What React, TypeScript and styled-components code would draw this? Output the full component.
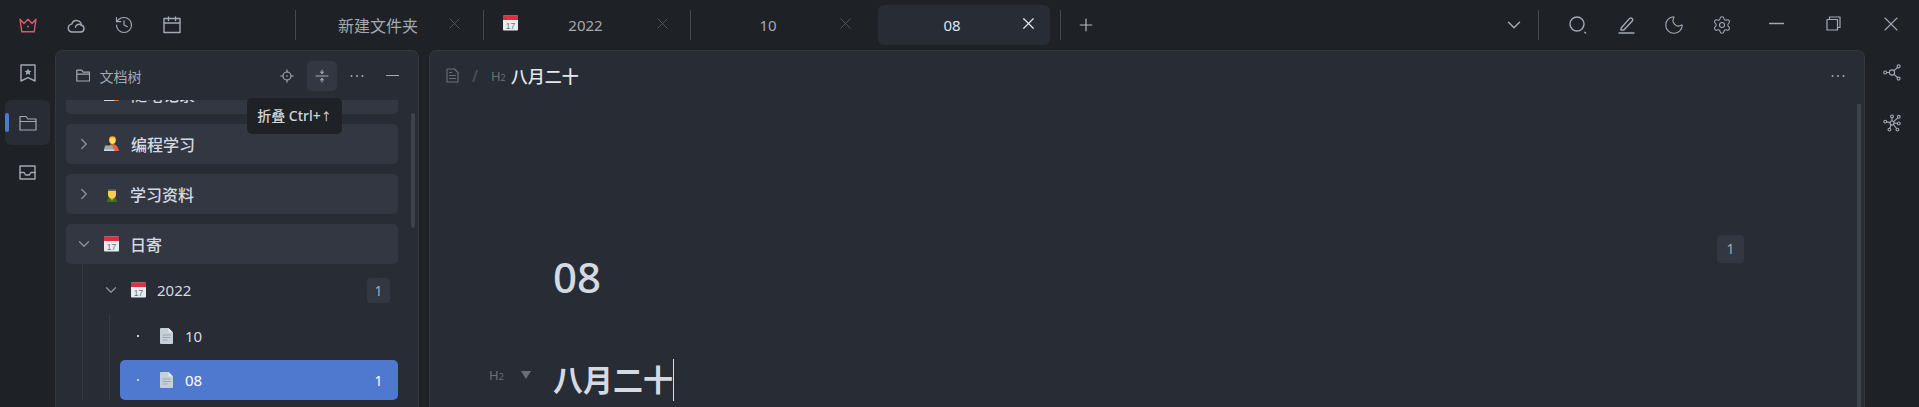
import { ReactNode } from "react";
import styled, { createGlobalStyle } from "styled-components";
import { ChevronDown, ChevronRight, History, Moon, Plus, Settings, X } from "lucide-react";

const GlobalStyle = createGlobalStyle`
    html, body, #root {
        margin: 0;
        height: 100%;
        overflow: hidden;
    }
    body {
        background: #1e2126;
        font-family: "Noto Sans", "Noto Sans CJK SC", sans-serif;
    }
`;

const Page = styled.div`
    display: flex;
    flex-direction: column;
    height: 407px;
    background: #1e2126;
`;

const TopBar = styled.header`
    display: flex;
    align-items: center;
    flex: 0 0 50px;
    height: 50px;
    color: #a3a9b3;
`;

const IconGroup = styled.div`
    display: flex;
    align-items: center;
    padding-left: ${(p: { $pad?: number }) => p.$pad ?? 0}px;
`;

const LeadGroup = styled(IconGroup)`
    width: 291px;
    box-sizing: border-box;
`;

const IconSlot = styled.div<{ $w?: number; $color?: string; $dy?: number; $h?: number }>`
    display: flex;
    align-items: center;
    justify-content: center;
    width: ${(p) => p.$w ?? 48}px;
    height: ${(p) => p.$h ?? 30}px;
    color: ${(p) => p.$color ?? "inherit"};
    margin-top: ${(p) => p.$dy ?? 0}px;
`;

const Sep = styled.div<{ $ml?: number }>`
    flex: 0 0 1px;
    height: 30px;
    background: #454952;
    margin-left: ${(p) => p.$ml ?? 0}px;
`;

const Tab = styled.div<{ $w: number; $active?: boolean; $left: number; $right: number; $ml?: number; $size?: number }>`
    position: relative;
    display: flex;
    align-items: center;
    flex: 0 0 ${(p) => p.$w}px;
    height: 40px;
    margin-left: ${(p) => p.$ml ?? 0}px;
    padding: 0 ${(p) => p.$right}px 0 ${(p) => p.$left}px;
    box-sizing: border-box;
    border-radius: 6px;
    background: ${(p) => (p.$active ? "#282c35" : "transparent")};
    color: ${(p) => (p.$active ? "#dfe4ec" : "#a3a9b3")};
    font-size: ${(p) => p.$size ?? 15}px;
`;

const TabTitle = styled.span`
    flex: 1;
    text-align: center;
`;

const TabClose = styled.span<{ $active?: boolean }>`
    display: flex;
    margin-top: -3px;
    color: ${(p) => (p.$active ? "#dfe4ec" : "#565a62")};
`;

const TabIcon = styled.span`
    display: flex;
    margin-top: -4px;
`;

const AddButton = styled.div`
    display: flex;
    margin-left: 15px;
    color: #b4bac4;
`;

const Spacer = styled.div`
    flex: 1;
`;

const Body = styled.div`
    display: flex;
    flex: 1;
    min-height: 0;
`;

const Rail = styled.nav<{ $w: number }>`
    display: flex;
    flex-direction: column;
    flex: 0 0 ${(p) => p.$w}px;
    color: #a3a9b3;
`;

const RailItem = styled.div<{ $active?: boolean; $mt?: number }>`
    position: relative;
    display: flex;
    align-items: center;
    justify-content: center;
    width: 45px;
    height: 45px;
    margin: ${(p) => p.$mt ?? 0}px 0 0 5px;
    border-radius: 6px;
    background: ${(p) => (p.$active ? "#282c35" : "transparent")};
`;

const ActiveBar = styled.span`
    position: absolute;
    left: 0;
    top: 13px;
    width: 4px;
    height: 19px;
    border-radius: 2px;
    background: #4f79cf;
`;

const TreePanel = styled.aside`
    position: relative;
    display: flex;
    flex-direction: column;
    flex: 0 0 364px;
    box-sizing: border-box;
    background: #282c35;
    border: 1px solid #34373d;
    border-bottom: 0;
    border-radius: 8px 8px 0 0;
    margin-right: 10px;
`;

const PanelHead = styled.div`
    display: flex;
    align-items: center;
    flex: 0 0 49px;
    padding-left: 20px;
    color: #a3a9b3;
    font-size: 14px;
`;

const PanelTitle = styled.span`
    margin-left: 9px;
    flex: 1;
`;

const HeadButton = styled.div<{ $on?: boolean }>`
    display: flex;
    align-items: center;
    justify-content: center;
    width: 30px;
    height: 30px;
    margin-left: 5px;
    border-radius: 5px;
    background: ${(p) => (p.$on ? "#323741" : "transparent")};
    color: #a3a9b3;
`;

const HeadButtons = styled.div`
    display: flex;
    align-items: center;
    padding-right: 11px;
`;

const Tip = styled.div`
    position: absolute;
    left: 191px;
    top: 47px;
    z-index: 5;
    width: 95px;
    height: 36px;
    line-height: 36px;
    text-align: center;
    border-radius: 5px;
    background: #1e2126;
    color: #d2d6dd;
    font-size: 14px;
    font-weight: 500;
    & > small {
        font-size: 11px;
    }
`;

const PanelScroll = styled.span`
    position: absolute;
    left: 355px;
    top: 62px;
    width: 4px;
    height: 115px;
    border-radius: 2px;
    background: #3e424b;
`;

const TreeClip = styled.div`
    flex: 1;
    min-height: 0;
    overflow: hidden;
    padding: 0 20px 0 10px;
`;

const TreeList = styled.div`
    margin-top: -26px;
`;

const Row = styled.div<{ $boxed?: boolean; $active?: boolean; $pad?: number; $last?: boolean }>`
    display: flex;
    align-items: center;
    height: 40px;
    padding: 0 8px 0 ${(p) => p.$pad ?? 11}px;
    border-radius: 5px;
    margin-bottom: ${(p) => (p.$boxed && !p.$last ? 10 : 0)}px;
    background: ${(p) => (p.$active ? "#4f79cf" : p.$boxed ? "#323741" : "transparent")};
    color: ${(p) => (p.$active ? "#fff" : "#d5dae2")};
    font-size: ${(p) => (p.$boxed ? 16 : 15)}px;
    font-weight: ${(p) => (p.$boxed ? 500 : 400)};
`;

const Arrow = styled.span`
    display: flex;
    flex: 0 0 14px;
    min-width: 0;
    justify-content: center;
    color: #8b909a;
    margin-right: 13px;
    & > svg {
        flex-shrink: 0;
    }
`;

const Dot = styled.span`
    flex: 0 0 14px;
    margin-right: 14px;
    display: flex;
    justify-content: center;
    &::before {
        content: "";
        width: 2px;
        height: 2px;
        background: #c9ced6;
    }
`;

const Glyph = styled.span`
    display: flex;
    flex: 0 0 15px;
    justify-content: center;
    margin-right: 11px;
`;

const Label = styled.span`
    flex: 1;
`;

const Badge = styled.span<{ $plain?: boolean }>`
    width: 23px;
    height: 25px;
    line-height: 25px;
    text-align: center;
    border-radius: 4px;
    font-size: 14px;
    background: ${(p) => (p.$plain ? "transparent" : "#323741")};
    color: ${(p) => (p.$plain ? "#fff" : "#a3a9b3")};
`;

const Branch = styled.div<{ $ml: number; $pl: number; $pt: number }>`
    margin-left: ${(p) => p.$ml}px;
    padding: ${(p) => p.$pt}px 0 0 ${(p) => p.$pl}px;
    border-left: 1px solid #363a42;
    display: flex;
    flex-direction: column;
    gap: 4px;
`;

const Editor = styled.main`
    position: relative;
    flex: 1;
    min-width: 0;
    box-sizing: border-box;
    background: #282c35;
    border: 1px solid #34373d;
    border-bottom: 0;
    border-radius: 8px 8px 0 0;
`;

const Crumbs = styled.div`
    display: flex;
    align-items: center;
    height: 49px;
    padding: 0 19px 0 16px;
    color: #a3a9b3;
`;

const CrumbIcon = styled.span`
    display: flex;
    color: #6b707a;
`;

const CrumbSlash = styled.span`
    margin: 0 13px 0 13px;
    font-size: 16px;
    color: #555a63;
`;

const HeadingTag = styled.span`
    font-size: 13px;
    color: #6b707a;
    & > small {
        font-size: 9px;
    }
`;

const CrumbText = styled.span`
    flex: 1;
    margin-left: 5px;
    font-size: 17px;
    font-weight: 500;
    color: #e4e8ee;
`;

const Content = styled.div`
    padding: 147px 0 0 123px;
`;

const DocTitle = styled.h1`
    margin: 0;
    font-size: 42px;
    font-weight: 500;
    line-height: 60px;
    color: #d5dae2;
`;

const HeadingRow = styled.div`
    position: relative;
    margin-top: 52px;
    height: 42px;
    display: flex;
    align-items: center;
`;

const Gutter = styled.div`
    position: absolute;
    left: -64px;
    top: 7px;
    display: flex;
    align-items: center;
    gap: 17px;
`;

const Fold = styled.span`
    width: 0;
    height: 0;
    border-left: 5px solid transparent;
    border-right: 5px solid transparent;
    border-top: 8px solid #696e78;
`;

const Heading = styled.h2`
    margin: 0;
    font-size: 30px;
    line-height: 42px;
    font-weight: 700;
    color: #d5dae2;
    border-right: 1px solid #d5dae2;
`;

const RefBadge = styled.span`
    position: absolute;
    left: 1287px;
    top: 184px;
    width: 27px;
    height: 28px;
    line-height: 28px;
    text-align: center;
    border-radius: 4px;
    background: #323741;
    color: #a3a9b3;
    font-size: 14px;
`;

const EditorScroll = styled.span`
    position: absolute;
    right: 3px;
    top: 53px;
    bottom: 0;
    width: 4px;
    background: #3e424b;
`;

const Svg = ({ w, h, children, sw = 1.4 }: { w: number; h: number; children: ReactNode; sw?: number }) => (
    <svg width={w} height={h} viewBox={`0 0 ${w} ${h}`} fill="none" stroke="currentColor" strokeWidth={sw} strokeLinecap="round" strokeLinejoin="round">
        {children}
    </svg>
);

const CrownIcon = () => (
    <Svg w={18} h={15}>
        <path d="M1 1.2 5 5.4 9 1.2l4 4.2 4-4.2-1.8 12.6H2.8z" />
        <circle cx="9" cy="8.6" r="1" fill="currentColor" stroke="none" />
    </Svg>
);

const CloudIcon = () => (
    <Svg w={18} h={15}>
        <path d="M4.6 14h9.2a3.4 3.4 0 0 0 .6-6.7 4.9 4.9 0 0 0-9.600-1.200A4 4 0 0 0 4.600 14z" />
        <path d="M8.400 9.200a3.600 3.600 0 0 1 6-1.900" />
    </Svg>
);

const CalendarIcon = () => (
    <Svg w={18} h={18}>
        <rect x="1" y="2.500" width="16" height="14" />
        <path d="M1 7h16M5.500 1v3.500M12.500 1v3.500" />
    </Svg>
);

const BookmarkIcon = () => (
    <Svg w={16} h={18}>
        <path d="M1 1h14v16l-7-3.400L1 17z" />
        <path d="m8 4.400 1.100 2.300 2.400.3-1.800 1.600.5 2.400L8 9.800l-2.200 1.200.5-2.400L4.500 7l2.400-.3z" fill="currentColor" stroke="none" />
    </Svg>
);

const FolderIcon = ({ s = 1 }: { s?: number }) => (
    <svg width={18 * s} height={16 * s} viewBox="0 0 18 16" fill="none" stroke="currentColor" strokeWidth={1.2 / s} strokeLinejoin="round">
        <path d="M1 1.500h6l2 2.500h8v11H1zM1 6.500h16" />
    </svg>
);

const InboxIcon = () => (
    <Svg w={17} h={15}>
        <rect x="1" y="1" width="15" height="13" />
        <path d="M1 7.500h4.200L6.600 10h3.800l1.400-2.500H16" />
    </Svg>
);

const LocateIcon = () => (
    <Svg w={14} h={14} sw={1.1}>
        <circle cx="7" cy="7" r="4" />
        <circle cx="7" cy="7" r="0.8" fill="currentColor" stroke="none" />
        <path d="M7 .8v2.200M7 11v2.200M.8 7H3M11 7h2.200" />
    </Svg>
);

const CollapseIcon = () => (
    <Svg w={14} h={14} sw={1.1}>
        <path d="M1 7h12M7 1v3M7 10v3M5.600 3 7 4.600 8.400 3M5.600 11 7 9.400 8.400 11" />
    </Svg>
);

const DotsIcon = () => (
    <svg width="14" height="4" viewBox="0 0 14 4" fill="currentColor">
        <circle cx="1.500" cy="2" r="1" />
        <circle cx="7" cy="2" r="1" />
        <circle cx="12.500" cy="2" r="1" />
    </svg>
);

const MinusIcon = ({ w = 13, sw = 1.2 }: { w?: number; sw?: number }) => (
    <Svg w={w} h={3} sw={sw}>
        <path d={`M0.5 1.5H${w - 0.5}`} />
    </Svg>
);

const SearchIcon = () => (
    <Svg w={18} h={18}>
        <circle cx="8" cy="8" r="7" />
        <path d="m15.800 16.200.8.8" />
    </Svg>
);

const PenIcon = () => (
    <Svg w={17} h={18}>
        <path d="M3 12.200 11.600 2.400a1.600 1.600 0 0 1 2.300 0l.4.4a1.600 1.600 0 0 1 0 2.200L5.800 14H3z" />
        <path d="M1 17h15" />
    </Svg>
);

const RestoreIcon = () => (
    <Svg w={15} h={15} sw={1.2}>
        <rect x="1" y="3.500" width="10.500" height="10.500" />
        <path d="M3.500 3.500V1H14v10.500h-2.500" />
    </Svg>
);

const GraphIcon = () => (
    <Svg w={18} h={17} sw={1.1}>
        <circle cx="9" cy="8.500" r="2.600" />
        <circle cx="2.200" cy="8.500" r="1.500" />
        <circle cx="15.600" cy="2.400" r="1.500" />
        <circle cx="15.600" cy="14.600" r="1.500" />
        <path d="M3.700 8.500h2.700M11 6.700l3.500-3.200M11 10.300l3.500 3.200" />
    </Svg>
);

const GlobalGraphIcon = () => (
    <Svg w={18} h={18} sw={1.1}>
        <circle cx="9" cy="9" r="2" />
        <circle cx="9" cy="2.400" r="1.400" />
        <circle cx="15.800" cy="2.800" r="1.400" />
        <circle cx="2.200" cy="7.600" r="1.400" />
        <circle cx="15.800" cy="9.400" r="1.400" />
        <circle cx="6.400" cy="15.600" r="1.400" />
        <circle cx="14.400" cy="15.600" r="1.400" />
        <path d="M9 3.800V7M10.600 7.600l4.200-3.800M3.600 7.900 7 8.600M11 9.100l3.400.2M8 10.800l-1.200 3.400M10.400 10.500l3.200 4" />
    </Svg>
);

const DateEmoji = () => (
    <svg width="15" height="16" viewBox="0 0 15 16">
        <rect x="0" y="0.500" width="15" height="15" rx="1" fill="#e8ecef" />
        <path d="M1 .5h13a1 1 0 0 1 1 1V5H0V1.500a1 1 0 0 1 1-1z" fill="#dd2e44" />
        <text x="7.500" y="13.600" textAnchor="middle" fontSize="8.500" fontFamily="Liberation Sans" fill="#66757f">17</text>
    </svg>
);

const CoderEmoji = () => (
    <svg width="16" height="16" viewBox="0 0 16 16">
        <circle cx="8.500" cy="3.600" r="3.400" fill="#ffac33" />
        <circle cx="8.500" cy="5" r="3" fill="#ffdc5d" />
        <path d="M5 12c0-3 1.500-4 3.500-4s5.500 1 6.500 7H5z" fill="#e8623f" />
        <path d="M1 9.500h7.500l1 4.500H0z" fill="#99aab5" />
        <rect x="0" y="13.500" width="10.500" height="1.500" fill="#ccd6dd" />
    </svg>
);

const StudentEmoji = () => (
    <svg width="14" height="16" viewBox="0 0 14 16">
        <path d="M3 12h8l1 4H2z" fill="#3e721d" />
        <path d="M5.800 11h2.400L7 15z" fill="#ffcc4d" />
        <path d="M3 5h8v3.500a4 4 0 0 1-8 0z" fill="#ffcc4d" />
        <path d="M1 2.400 7 .5l6 1.900-6 2.200z" fill="#31373d" />
        <rect x="3" y="3.400" width="8" height="1.400" fill="#66757f" />
    </svg>
);

const FileEmoji = () => (
    <svg width="13" height="16" viewBox="0 0 13 16">
        <path d="M1 0h7.500L13 4.500V15a1 1 0 0 1-1 1H1a1 1 0 0 1-1-1V1a1 1 0 0 1 1-1z" fill="#c5d0d8" />
        <path d="M8.500 0 13 4.500H9.300a.8.8 0 0 1-.8-.8z" fill="#e6ebef" />
        <path d="M2.500 7h8M2.500 9.500h8M2.500 12h5" stroke="#9aa7b1" strokeWidth="1" />
    </svg>
);

const CrumbFile = () => (
    <Svg w={13} h={15} sw={1.1}>
        <path d="M1 1h7.500L12 4.500V14H1zM3.500 7.500h6M3.500 10.500h6M3.500 4.500h2" />
    </Svg>
);

export default function App() {
    return (
        <Page>
            <GlobalStyle />
            <TopBar>
                <LeadGroup $pad={4}>
                    <IconSlot $color="#d9596a"><CrownIcon /></IconSlot>
                    <IconSlot><CloudIcon /></IconSlot>
                    <IconSlot><History size={20} strokeWidth={1.4} /></IconSlot>
                    <IconSlot><CalendarIcon /></IconSlot>
                </LeadGroup>
                <Sep $ml={4} />
                <Tab $w={187} $left={15} $right={19} $size={16}>
                    <TabTitle>新建文件夹</TabTitle>
                    <TabClose><X size={19} strokeWidth={1.1} /></TabClose>
                </Tab>
                <Sep />
                <Tab $w={206} $left={19} $right={18}>
                    <TabIcon><DateEmoji /></TabIcon>
                    <TabTitle>2022</TabTitle>
                    <TabClose><X size={19} strokeWidth={1.1} /></TabClose>
                </Tab>
                <Sep />
                <Tab $w={182} $left={9} $right={18}>
                    <TabTitle>10</TabTitle>
                    <TabClose><X size={19} strokeWidth={1.1} /></TabClose>
                </Tab>
                <Tab $w={172} $active $left={7} $right={12} $ml={5}>
                    <TabTitle>08</TabTitle>
                    <TabClose $active><X size={19} strokeWidth={1.5} /></TabClose>
                </Tab>
                <Sep $ml={10} />
                <AddButton><Plus size={20} strokeWidth={1.4} /></AddButton>
                <Spacer />
                <IconSlot><ChevronDown size={22} strokeWidth={1.6} /></IconSlot>
                <Sep />
                <IconGroup $pad={15}>
                    <IconSlot><SearchIcon /></IconSlot>
                    <IconSlot><PenIcon /></IconSlot>
                    <IconSlot><Moon size={22} strokeWidth={1.2} /></IconSlot>
                    <IconSlot><Settings size={20} strokeWidth={1.3} /></IconSlot>
                </IconGroup>
                <IconGroup $pad={2}>
                    <IconSlot $w={57} $dy={-3}><MinusIcon w={15} sw={1.4} /></IconSlot>
                    <IconSlot $w={57} $dy={-3}><RestoreIcon /></IconSlot>
                    <IconSlot $w={57} $dy={-3}><X size={24} strokeWidth={1.1} /></IconSlot>
                </IconGroup>
            </TopBar>
            <Body>
                <Rail $w={55}>
                    <RailItem><BookmarkIcon /></RailItem>
                    <RailItem $active $mt={5}>
                        <ActiveBar />
                        <FolderIcon />
                    </RailItem>
                    <RailItem $mt={5}><InboxIcon /></RailItem>
                </Rail>
                <TreePanel>
                    <PanelHead>
                        <FolderIcon s={0.8} />
                        <PanelTitle>文档树</PanelTitle>
                        <HeadButtons>
                            <HeadButton><LocateIcon /></HeadButton>
                            <HeadButton $on><CollapseIcon /></HeadButton>
                            <HeadButton><DotsIcon /></HeadButton>
                            <HeadButton><MinusIcon /></HeadButton>
                        </HeadButtons>
                    </PanelHead>
                    <Tip>折叠 Ctrl+<small>↑</small></Tip>
                    <TreeClip>
                        <TreeList>
                            <Row $boxed>
                                <Arrow><ChevronRight size={18} strokeWidth={1.8} /></Arrow>
                                <Glyph><CoderEmoji /></Glyph>
                                <Label>随笔记录</Label>
                            </Row>
                            <Row $boxed>
                                <Arrow><ChevronRight size={18} strokeWidth={1.8} /></Arrow>
                                <Glyph><CoderEmoji /></Glyph>
                                <Label>编程学习</Label>
                            </Row>
                            <Row $boxed>
                                <Arrow><ChevronRight size={18} strokeWidth={1.8} /></Arrow>
                                <Glyph><StudentEmoji /></Glyph>
                                <Label>学习资料</Label>
                            </Row>
                            <Row $boxed $last>
                                <Arrow><ChevronDown size={18} strokeWidth={1.8} /></Arrow>
                                <Glyph><DateEmoji /></Glyph>
                                <Label>日寄</Label>
                            </Row>
                            <Branch $ml={16} $pl={11} $pt={6}>
                                <Row $pad={10}>
                                    <Arrow><ChevronDown size={18} strokeWidth={1.8} /></Arrow>
                                    <Glyph><DateEmoji /></Glyph>
                                    <Label>2022</Label>
                                    <Badge>1</Badge>
                                </Row>
                                <Branch $ml={15} $pl={10} $pt={2}>
                                    <Row>
                                        <Dot />
                                        <Glyph><FileEmoji /></Glyph>
                                        <Label>10</Label>
                                    </Row>
                                    <Row $active>
                                        <Dot />
                                        <Glyph><FileEmoji /></Glyph>
                                        <Label>08</Label>
                                        <Badge $plain>1</Badge>
                                    </Row>
                                </Branch>
                            </Branch>
                        </TreeList>
                    </TreeClip>
                    <PanelScroll />
                </TreePanel>
                <Editor>
                    <Crumbs>
                        <CrumbIcon><CrumbFile /></CrumbIcon>
                        <CrumbSlash>/</CrumbSlash>
                        <HeadingTag>H<small>2</small></HeadingTag>
                        <CrumbText>八月二十</CrumbText>
                        <DotsIcon />
                    </Crumbs>
                    <Content>
                        <DocTitle>08</DocTitle>
                        <HeadingRow>
                            <Gutter>
                                <HeadingTag>H<small>2</small></HeadingTag>
                                <Fold />
                            </Gutter>
                            <Heading>八月二十</Heading>
                        </HeadingRow>
                    </Content>
                    <RefBadge>1</RefBadge>
                    <EditorScroll />
                </Editor>
                <Rail $w={54}>
                    <IconSlot $w={54} $h={45}><GraphIcon /></IconSlot>
                    <IconSlot $w={54} $h={45} $dy={5}><GlobalGraphIcon /></IconSlot>
                </Rail>
            </Body>
        </Page>
    );
}
